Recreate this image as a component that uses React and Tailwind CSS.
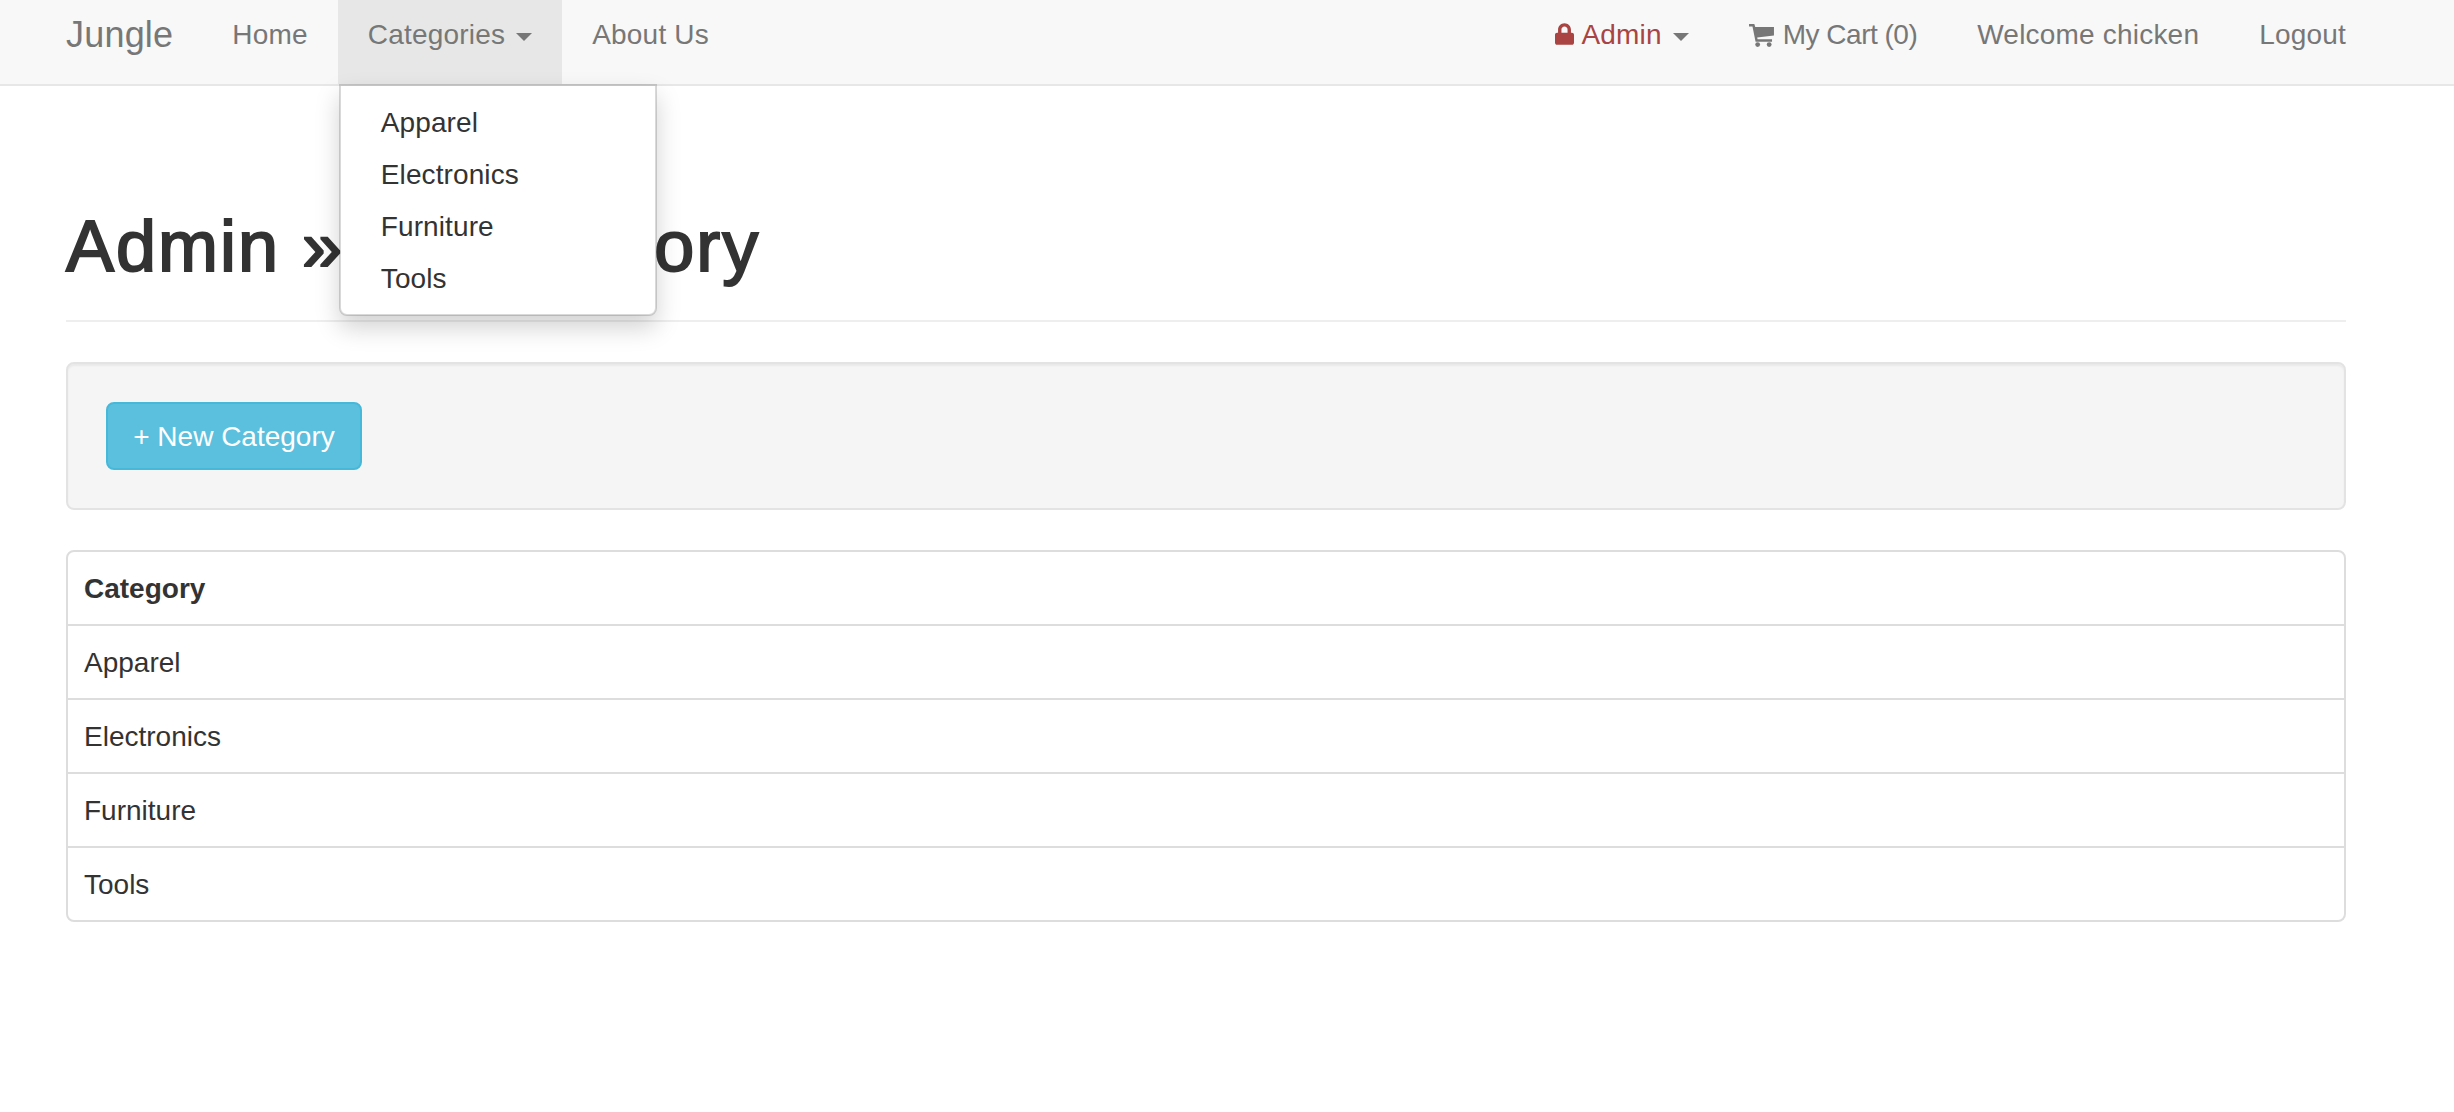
import { FaLock } from "react-icons/fa";

const font = "font-['Helvetica_Neue','Liberation_Sans',Arial,sans-serif]";
const categories = ["Apparel", "Electronics", "Furniture", "Tools"];

function Caret() {
  return (
    <span className="ml-[11px] inline-block h-0 w-0 border-x-[8px] border-t-[8px] border-x-transparent border-t-current align-middle" />
  );
}

function CartIcon() {
  return (
    <svg viewBox="0 0 26 24" className="mr-[9px] inline-block h-[23px] w-[25px] align-[-3px]" fill="currentColor">
      <path d="M0 0h5.5l1 3H26v9L8.5 14l.4 2H24v2.5H6.8L3.6 2.5H0z" />
      <circle cx="9" cy="21.5" r="2.5" />
      <circle cx="21" cy="21.5" r="2.5" />
    </svg>
  );
}

function NavItem({ children, className = "" }) {
  return <a className={`block h-[84px] px-[30px] pt-[15px] text-[28px] leading-[40px] text-[#777] ${className || "tracking-[0.2px]"}`}>{children}</a>;
}

export default function App() {
  return (
    <div className={`min-h-[1112px] bg-white text-[#333] ${font}`}>
      <nav className="flex h-[86px] border-b-2 border-[#e7e7e7] bg-[#f8f8f8] pl-[66px] pr-[108px]">
        <a className="block pr-[29px] pt-[15px] text-[36px] leading-[40px] tracking-[0.2px] text-[#777]">Jungle</a>
        <NavItem>Home</NavItem>
        <div className="relative">
          <NavItem className="bg-[#e7e7e7] tracking-[0.2px] text-[#555]">
            Categories
            <Caret />
          </NavItem>
          <ul className="absolute left-[1px] top-[84px] z-10 w-[318px] rounded-b-[8px] border-2 border-black/15 bg-white bg-clip-padding py-[10px] shadow-[0_12px_24px_rgba(0,0,0,0.175)]">
            {categories.map((c) => (
              <li key={c} className="px-[40px] pb-[5px] pt-[7px] text-[28px] leading-[40px] tracking-[0.1px] text-[#333]">
                {c}
              </li>
            ))}
          </ul>
        </div>
        <NavItem>About Us</NavItem>
        <div className="ml-auto flex">
          <NavItem>
            <span className="text-[#a94442]">
              <FaLock className="mr-[7px] inline-block h-[22px] w-[19px] align-[-1px]" />
              Admin
            </span>
            <Caret />
          </NavItem>
          <NavItem className="tracking-[-0.5px]">
            <CartIcon />
            My Cart (0)
          </NavItem>
          <NavItem>Welcome chicken</NavItem>
          <a className="block h-[84px] pl-[30px] pt-[15px] text-[28px] leading-[40px] tracking-[0.2px] text-[#777]">Logout</a>
        </div>
      </nav>

      <main className="pl-[66px] pr-[108px]">
        <div className="mt-[120px] border-b-2 border-[#eee] pb-[34px]">
          <h1 className="text-[72px] font-normal leading-[80px] tracking-[2px] text-[#333] [-webkit-text-stroke-color:#333] [-webkit-text-stroke-width:2px]">
            Admin » <span className="[word-spacing:-22px]">All Category</span>
          </h1>
        </div>
        <div className="mt-[40px] rounded-[8px] border-2 border-[#e3e3e3] bg-[#f5f5f5] p-[38px] shadow-[inset_0_2px_2px_rgba(0,0,0,0.05)]">
          <a className="flex h-[68px] w-[256px] items-center justify-center rounded-[8px] border-2 border-[#46b8da] bg-[#5bc0de] pt-[1px] text-[28px] text-white">
            + New Category
          </a>
        </div>
        <div className="mt-[40px] rounded-[8px] border-2 border-[#ddd]">
          <div className="px-[16px] pb-[15px] pt-[17px] text-[28px] font-bold leading-[40px]">Category</div>
          {categories.map((c) => (
            <div key={c} className="border-t-2 border-[#ddd] px-[16px] pb-[15px] pt-[17px] text-[28px] leading-[40px]">
              {c}
            </div>
          ))}
        </div>
      </main>
    </div>
  );
}
